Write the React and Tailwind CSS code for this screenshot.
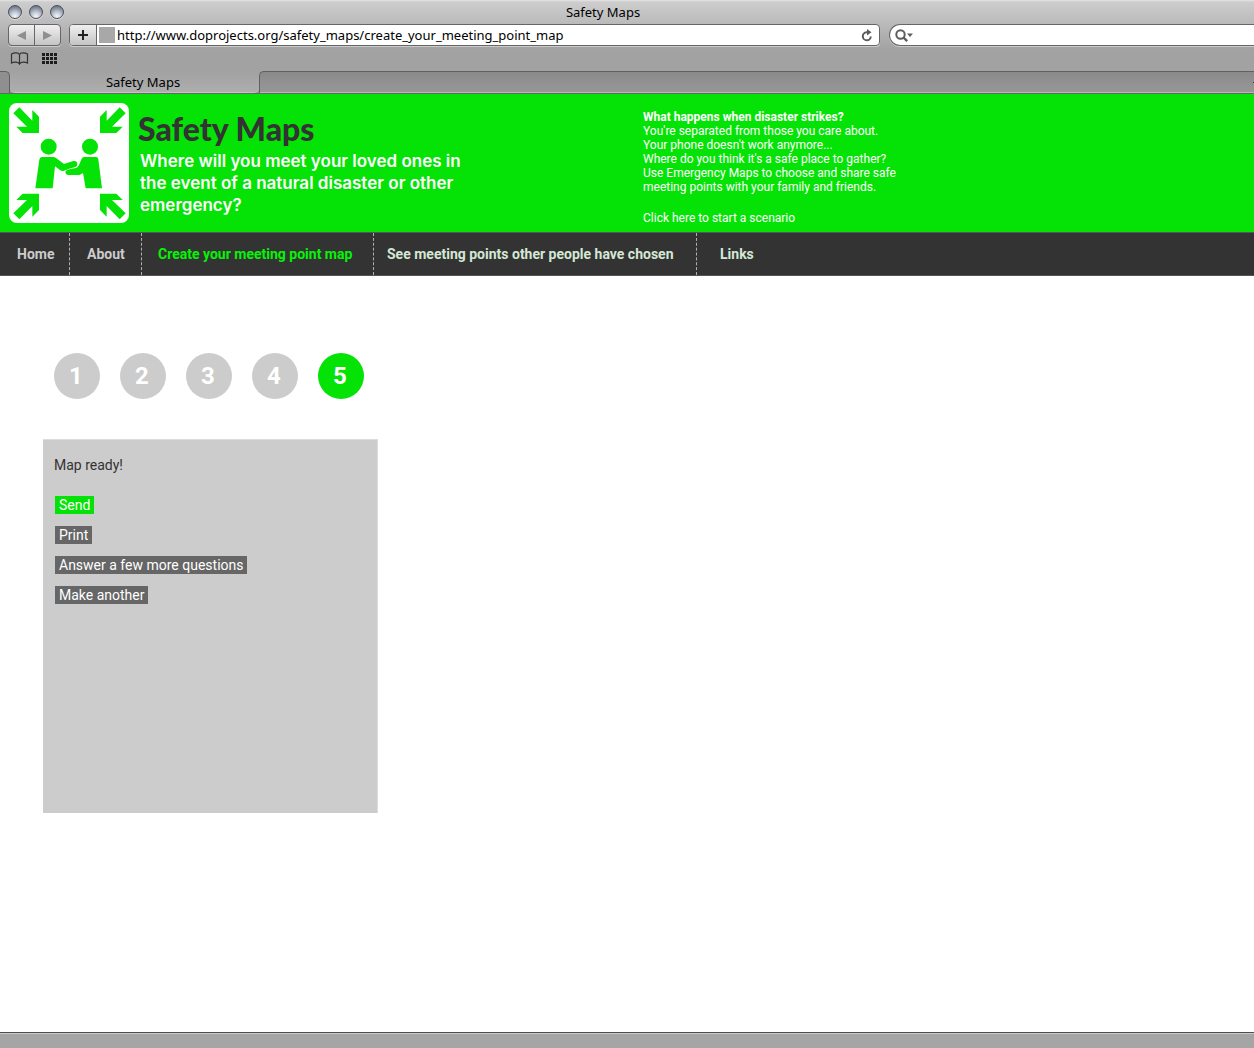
const NAV = [
  { label: 'Home', box: 'w-[70px] pl-[17px] text-[#cccccc]' },
  { label: 'About', box: 'w-[72px] pl-[17px] text-[#cccccc]' },
  { label: 'Create your meeting point map', box: 'w-[232px] pl-4 text-[#05f505]' },
  { label: 'See meeting points other people have chosen', box: 'w-[323px] pl-[13px] text-[#d5e8d5]' },
  { label: 'Links', box: 'border-r-0 pl-[23px] text-[#d5e8d5]' },
];

const ACTIONS = [
  { label: 'Send', box: 'bg-[#05e205]' },
  { label: 'Print', box: 'bg-[#666666]' },
  { label: 'Answer a few more questions', box: 'bg-[#666666]' },
  { label: 'Make another', box: 'bg-[#666666]' },
];

function Light() {
  return (
    <button
      type="button"
      aria-label="Window control"
      className="size-[14px] rounded-full border border-[#4c5058] bg-[radial-gradient(circle_at_50%_85%,#f4f7fb_0%,#c3cad6_35%,#858d9c_70%,#5d636f_100%)] shadow-[0_1px_0_#dddddd]"
    />
  );
}

function MeetingPointLogo() {
  const arrow = '58,40 97,80 97,48 117,68 117,117 68,117 49,98 81,98 40,58';
  return (
    <svg viewBox="27 27 360 360" className="size-[120px] shrink-0" role="img" aria-label="Meeting point">
      <rect x="27" y="27" width="360" height="360" rx="24" fill="#fff" />
      <g fill="#05e205">
        <polygon points={arrow} />
        <polygon points={arrow} transform="matrix(-1 0 0 1 417 0)" />
        <polygon points={arrow} transform="matrix(1 0 0 -1 0 416)" />
        <polygon points={arrow} transform="matrix(-1 0 0 -1 417 416)" />
        <circle cx="146" cy="158" r="24" />
        <circle cx="270" cy="158" r="24" />
        <path d="M126 189 H160 Q164 189 168 192 L192 210 L220 201 Q230 199 232 208 Q233 216 226 219 L208 224 L190 231 Q185 232 181 229 L165 217 L158 283 H106 L118 197 Q119 189 126 189 Z" />
        <path d="M252 189 H288 Q294 189 295 196 L306 283 H257 L249 237 L240 242 Q238 243 234 243 H206 Q197 243 196 234 Q197 229 203 227 L212 225 L228 222 Q233 220 237 213 L245 194 Q247 189 252 189 Z" />
      </g>
    </svg>
  );
}

function BrowserChrome() {
  return (
    <div className="bg-[linear-gradient(#e4e4e4_0px,#cdcdcd_2px,#b8b8b8_26px,#a2a2a2_50px,#a2a2a2_100%)] font-['Noto_Sans','DejaVu_Sans',sans-serif] text-[13px] text-black">
      <div className="grid h-6 grid-cols-3 items-center">
        <div className="flex gap-[7px] pl-2">
          <Light />
          <Light />
          <Light />
        </div>
        <div className="pr-12 text-center leading-5">Safety Maps</div>
      </div>

      <div className="flex h-[22px] pl-2">
        <div className="flex w-[53px] shrink-0 overflow-hidden rounded border border-[#666666] bg-linear-to-b from-[#f0f0f0] to-[#c4c4c4] shadow-[0_1px_0_#cccccc]">
          <button type="button" aria-label="Back" className="flex flex-1 items-center justify-center border-r border-[#666666]">
            <svg viewBox="0 0 9 9" className="size-[9px]"><path d="M9 0v9L0 4.500z" fill="#8f8f8f" /></svg>
          </button>
          <button type="button" aria-label="Forward" className="flex flex-1 items-center justify-center">
            <svg viewBox="0 0 9 9" className="size-[9px]"><path d="M0 0v9l9-4.500z" fill="#8f8f8f" /></svg>
          </button>
        </div>
        <div className="ml-2 flex w-[811px] overflow-hidden rounded border border-[#666666] bg-white shadow-[0_1px_0_#cccccc]">
          <button type="button" aria-label="Add bookmark" className="flex w-[27px] shrink-0 items-center justify-center border-r border-[#666666] bg-linear-to-b from-[#f0f0f0] to-[#c4c4c4]">
            <svg viewBox="0 0 10 10" className="size-[10px]"><path d="M5 0v10M0 5h10" stroke="#222" strokeWidth="2" /></svg>
          </button>
          <span className="my-[2px] ml-[2px] w-4 shrink-0 bg-[#a8a8a8]" />
          <input
            aria-label="Address"
            defaultValue="http://www.doprojects.org/safety_maps/create_your_meeting_point_map"
            className="ml-[2px] min-w-0 flex-1 bg-transparent pt-px outline-none"
          />
          <button type="button" aria-label="Reload" className="flex w-6 shrink-0 items-center justify-center">
            <svg viewBox="0 0 12 13" className="h-[13px] w-3" fill="none">
              <path d="M7 3.300H5.500a4 4 0 1 0 4.300 4.200" stroke="#5c5c5c" strokeWidth="2" />
              <path d="M6 0l4.500 3.300L6 6.500z" fill="#5c5c5c" />
            </svg>
          </button>
        </div>
        <label className="ml-[9px] flex flex-1 items-center rounded-l-full border border-r-0 border-[#666666] bg-white pl-[5px] shadow-[0_1px_0_#cccccc]">
          <svg viewBox="0 0 18 13" className="h-[13px] w-[18px] shrink-0" fill="none">
            <circle cx="5.500" cy="5.500" r="4.200" stroke="#5c5c5c" strokeWidth="2" />
            <path d="M8.500 8.500l3.700 3.700" stroke="#5c5c5c" strokeWidth="2.400" />
            <path d="M12 4.500h6l-3 3.600z" fill="#5c5c5c" />
          </svg>
          <input aria-label="Search" className="min-w-0 flex-1 bg-transparent outline-none" />
        </label>
      </div>

      <div className="flex h-[25px] items-center gap-[13px] pl-[10px]">
        <button type="button" aria-label="Bookmarks">
          <svg viewBox="0 0 19 13" className="h-[13px] w-[19px]" fill="none" stroke="#333" strokeWidth="1.200">
            <path d="M9.500 2.500C8.500 0.500 4 0.500 1.500 2V11C4 9.700 8.500 9.700 9.500 12C10.500 9.700 15 9.700 17.500 11V2C15 0.500 10.500 0.500 9.500 2.500zM9.500 2.500v9" />
          </svg>
        </button>
        <button type="button" aria-label="Top sites">
          <svg viewBox="0 0 15 11" className="h-[11px] w-[15px]" fill="#1c1c1c">
            {[0, 4, 8].flatMap((y) => [0, 4, 8, 12].map((x) => <rect key={x + '-' + y} x={x} y={y} width="3" height="3" />))}
          </svg>
        </button>
      </div>

      <div className="flex h-[23px] border-b border-[#666666]">
        <div className="w-[10px] rounded-tr-[5px] border-t border-r border-[#606060] bg-[#8f8f8f]" />
        <div className="bg-[#939393]">
          <button type="button" className="block h-[22px] w-[249px] rounded-b-[5px] border-b border-[#c4c4c4] bg-linear-to-b from-[#a2a2a2] to-[#adadad] pl-[17px] text-center leading-[22px]">
            Safety Maps
          </button>
        </div>
        <div className="flex flex-1 items-center justify-end rounded-tl-[5px] border-t border-l border-[#606060] bg-linear-to-b from-[#8a8a8a] to-[#989898] shadow-[inset_0_-1px_0_#b8b8b8]">
          <span className="h-px w-px bg-[#333333]" />
        </div>
      </div>
    </div>
  );
}

export default function App() {
  return (
    <div className="flex min-h-screen flex-col bg-white font-[Roboto,Inter,sans-serif]">
      <BrowserChrome />

      <header className="grid grid-cols-2 bg-[#05e205] text-white">
        <div className="flex gap-[9px] py-[9px] pl-[9px]">
          <MeetingPointLogo />
          <div className="pt-2">
            <h1 className="font-[Lato,sans-serif] text-[32px] leading-9 font-black text-[#333333]">Safety Maps</h1>
            <p className="max-w-[332px] pt-[3px] pl-[2px] font-[Inter,sans-serif] text-[17px] leading-[22px] font-semibold">
              Where will you meet your loved ones in the event of a natural disaster or other emergency?
            </p>
          </div>
        </div>
        <div className="pt-4 pl-4 text-xs leading-[14px]">
          <p className="font-bold">What happens when disaster strikes?</p>
          <p>You're separated from those you care about.</p>
          <p>Your phone doesn't work anymore...</p>
          <p>Where do you think it's a safe place to gather?</p>
          <p>
            Use Emergency Maps to choose and share safe
            <br />
            meeting points with your family and friends.
          </p>
          <a href="#scenario" className="mt-[17px] block">Click here to start a scenario</a>
        </div>
      </header>

      <nav className="flex h-11 border-y border-[#555555] bg-[#333333] text-sm font-bold">
        {NAV.map(({ label, box }) => (
          <a key={label} href="#top" className={`flex shrink-0 items-center border-r border-dashed border-[#b0b0b0] whitespace-nowrap ${box}`}>
            {label}
          </a>
        ))}
      </nav>

      <main className="flex-1 px-[43px] pt-[77px]">
        <ol className="flex gap-5 pl-[11px]">
          {[1, 2, 3, 4, 5].map((n) => (
            <li
              key={n}
              className={`flex size-[46px] items-center justify-center rounded-full pr-[2px] text-2xl font-bold text-white ${n === 5 ? 'bg-[#05e205]' : 'bg-[#cccccc]'}`}
            >
              {n}
            </li>
          ))}
        </ol>
        <section className="mt-10 min-h-[374px] w-[335px] border-t border-r border-[#dddddd] bg-[#cccccc] px-[11px] pt-[15px] text-sm">
          <p className="leading-5 text-[#333333]">Map ready!</p>
          <div className="mt-[21px] flex flex-col items-start gap-3 pl-px">
            {ACTIONS.map(({ label, box }) => (
              <button key={label} type="button" className={`h-[18px] px-1 leading-[18px] text-white ${box}`}>
                {label}
              </button>
            ))}
          </div>
        </section>
      </main>

      <footer className="h-4 border-t border-[#4d4d4d] bg-[#a5a5a5] shadow-[inset_0_1px_0_#c8c8c8]" />
    </div>
  );
}
